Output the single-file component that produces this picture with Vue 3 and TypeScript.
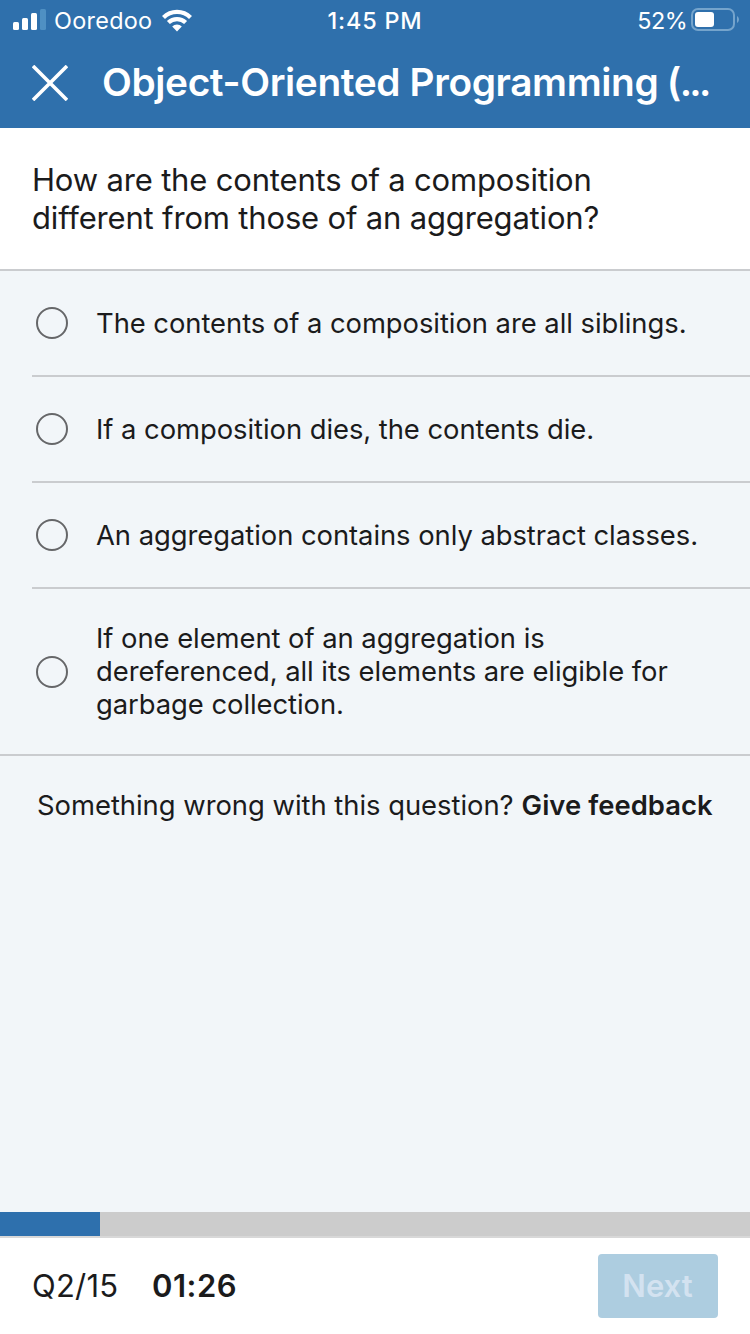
<script setup lang="ts">
import { ref } from 'vue'

interface Option {
  id: string
  lines: string[]
}

const options: Option[] = [
  { id: 'siblings', lines: ['The contents of a composition are all siblings.'] },
  { id: 'dies', lines: ['If a composition dies, the contents die.'] },
  { id: 'abstract', lines: ['An aggregation contains only abstract classes.'] },
  {
    id: 'garbage',
    lines: [
      'If one element of an aggregation is',
      'dereferenced, all its elements are eligible for',
      'garbage collection.',
    ],
  },
]

const current = 2
const total = 15
const progress = `${(current / total) * 100}%`
const selected = ref<string | null>(null)
</script>

<template>
  <div class="screen">
    <header class="header">
      <div class="status">
        <div class="carrier">
          <svg class="signal" width="34" height="22" viewBox="0 0 34 22" fill="#fff">
            <rect x="0" y="13" width="6" height="8" rx="1.5" />
            <rect x="9" y="9" width="6" height="12" rx="1.5" />
            <rect x="18" y="4" width="6" height="17" rx="1.5" />
            <rect x="27" y="0" width="6" height="21" rx="1.5" fill="#4f90c3" />
          </svg>
          <span class="carrier-name">Ooredoo</span>
          <svg class="wifi" width="30" height="23" viewBox="0 0 30 23">
            <g fill="none" stroke="#fff" stroke-width="4.2">
              <path d="M1.5 8.4a19.2 19.2 0 0 1 27 0" />
              <path d="M6.4 13.6a12.2 12.2 0 0 1 17.2 0" />
            </g>
            <path d="M10.2 17.6a6.8 6.8 0 0 1 9.6 0L15 22.4z" fill="#fff" />
          </svg>
        </div>
        <span class="clock">1:45 PM</span>
        <div class="power">
          <span class="percent">52%</span>
          <svg class="battery" width="48" height="24" viewBox="0 0 48 24">
            <rect x="1" y="1" width="42" height="21" rx="6" fill="none" stroke="#75a4cc" stroke-width="2" />
            <rect x="4" y="4" width="19" height="15" rx="3" fill="#fff" />
            <path d="M46 8c2.6 1.4 2.6 5.600 0 7z" fill="#75a4cc" />
          </svg>
        </div>
      </div>
      <div class="titlebar">
        <svg class="close" width="36" height="36" viewBox="0 0 36 36">
          <path d="M1 1 35 35M35 1 1 35" stroke="#fff" stroke-width="3.6" />
        </svg>
        <h1 class="title">Object-Oriented Programming <span class="paren">(</span><span class="dots">...</span></h1>
      </div>
    </header>

    <section class="question">
      How are the contents of a composition<br />
      different from those of an aggregation?
    </section>

    <ul class="options">
      <li
        v-for="option in options"
        :key="option.id"
        class="option"
        @click="selected = option.id"
      >
        <span class="radio" :class="{ checked: selected === option.id }"></span>
        <div class="option-body">
          <span v-for="line in option.lines" :key="line" class="line">{{ line }}</span>
        </div>
      </li>
    </ul>

    <p class="feedback">
      <span class="ask">Something wrong with this question?</span>
      <a class="give">Give feedback</a>
    </p>

    <div class="track"><div class="bar" :style="{ width: progress }"></div></div>
    <footer class="footer">
      <span class="count">Q{{ current }}/{{ total }}</span>
      <span class="timer">01:26</span>
      <button class="next" disabled>Next</button>
    </footer>
  </div>
</template>

<style>
body {
  margin: 0;
}
</style>

<style scoped>
.screen {
  box-sizing: border-box;
  width: 750px;
  height: 1334px;
  display: flex;
  flex-direction: column;
  overflow: hidden;
  background: #f2f6f9;
  color: #1b1b1c;
  font-family: Inter, "Liberation Sans", sans-serif;
  white-space: nowrap;
}
.header {
  height: 128px;
  flex: none;
  background: #2f70ac;
  color: #fff;
}
.status {
  height: 40px;
  display: grid;
  grid-template-columns: 1fr auto 1fr;
  align-items: center;
  font-size: 23.4px;
}
.carrier {
  display: flex;
  align-items: center;
  padding-left: 13px;
}
.signal {
  margin-right: 7px;
}
.carrier-name {
  width: 108px;
  letter-spacing: 0.3px;
}
.clock {
  font-weight: 500;
  letter-spacing: 0.8px;
}
.power {
  display: flex;
  align-items: center;
  justify-content: flex-end;
  padding-right: 11px;
}
.percent {
  margin-right: 4px;
  letter-spacing: -0.6px;
}
.titlebar {
  height: 86px;
  display: flex;
  align-items: center;
}
.close {
  margin: 0 34px 0 32px;
}
.title {
  margin: -3px 0 0;
  font-size: 38.8px;
  font-weight: 600;
  letter-spacing: -0.37px;
}
.paren {
  margin-left: -1px;
}
.dots {
  margin-left: -1px;
  letter-spacing: -2.8px;
}
.question {
  box-sizing: border-box;
  flex: none;
  height: 143px;
  padding: 33px 32px 0;
  border-bottom: 2px solid #cacccf;
  background: #fff;
  font-size: 31px;
  line-height: 38px;
  letter-spacing: -0.17px;
}
.options {
  margin: 0;
  padding: 0;
  list-style: none;
  border-bottom: 2px solid #cacccf;
}
.option {
  box-sizing: border-box;
  height: 106px;
  margin-left: 32px;
  padding-left: 4px;
  display: flex;
  align-items: center;
  border-bottom: 2px solid #cacccf;
}
.option:last-child {
  height: 165px;
  border-bottom: 0;
}
.radio {
  box-sizing: border-box;
  width: 32px;
  height: 32px;
  margin-right: 28px;
  border: 2px solid #666769;
  border-radius: 50%;
}
.radio.checked {
  border: 10px solid #2f70ac;
}
.option-body {
  font-size: 27.4px;
  line-height: 33px;
  letter-spacing: -0.05px;
}
.line {
  display: block;
}
.feedback {
  margin: 33px 0 0 37px;
  display: flex;
  gap: 8px;
  font-size: 27.4px;
  line-height: 33px;
  letter-spacing: -0.02px;
}
.give {
  font-weight: 600;
  letter-spacing: 0.05px;
}
.track {
  box-sizing: border-box;
  flex: none;
  height: 26px;
  margin-top: auto;
  border-bottom: 2px solid #d8d8d8;
  background: #cccccc;
}
.bar {
  height: 24px;
  background: #2e70ad;
}
.footer {
  box-sizing: border-box;
  flex: none;
  height: 96px;
  padding: 0 32px;
  display: flex;
  align-items: center;
  background: #fff;
  font-size: 31px;
}
.count {
  width: 120px;
  margin-top: -2px;
  letter-spacing: 0.2px;
}
.timer {
  margin-top: -2px;
  font-weight: 600;
  letter-spacing: 0.5px;
}
.next {
  width: 120px;
  height: 64px;
  margin-left: auto;
  padding: 0 1px 2px 0;
  border: 0;
  border-radius: 4px;
  background: #adcde0;
  color: #d3e2f0;
  font: 600 31px Inter, "Liberation Sans", sans-serif;
}
</style>
